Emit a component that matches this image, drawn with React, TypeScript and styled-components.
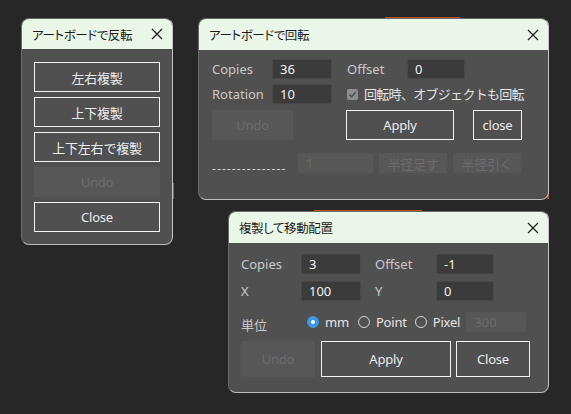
import React from 'react';
import styled, { createGlobalStyle } from 'styled-components';

const GlobalStyle = createGlobalStyle`
  html, body {
    margin: 0;
    padding: 0;
    background: #272727;
  }
  body {
    font-family: 'Noto Sans', 'Noto Sans CJK JP', sans-serif;
    -webkit-font-smoothing: antialiased;
  }
`;

const Desktop = styled.div`
  position: relative;
  width: 571px;
  height: 414px;
  overflow: hidden;
  background: #272727;
`;

const Window = styled.div<{ $left: number; $top: number; $w: number; $h: number }>`
  position: absolute;
  left: ${(p) => p.$left}px;
  top: ${(p) => p.$top}px;
  width: ${(p) => p.$w}px;
  height: ${(p) => p.$h}px;
  box-sizing: border-box;
  display: flex;
  flex-direction: column;
  background: #505050;
  border: 1px solid #6a6a6a;
  border-right-color: #c4c4c4;
  border-bottom-color: #bdbdbd;
  border-radius: 8px;
  overflow: hidden;
`;

const TitleBar = styled.div<{ $h: number }>`
  flex: none;
  height: ${(p) => p.$h}px;
  display: flex;
  align-items: center;
  justify-content: space-between;
  padding: 0 9px 0 10px;
  background: #eaf6e8;
  color: #1c1c1c;
  font-size: 12.5px;
  font-feature-settings: 'palt';
  letter-spacing: -0.4px;
`;

const CloseX = styled.span`
  display: flex;
  width: 12px;
  height: 12px;
`;

const Body = styled.div<{ $pad: string }>`
  flex: 1;
  display: flex;
  flex-direction: column;
  padding: ${(p) => p.$pad};
`;

const Stack = styled.div`
  display: flex;
  flex-direction: column;
  gap: 5px;
`;

const Row = styled.div<{ $mt?: number }>`
  display: flex;
  align-items: center;
  margin-top: ${(p) => p.$mt || 0}px;
`;

const Label = styled.span<{ $w: number; $dy?: number }>`
  flex: none;
  width: ${(p) => p.$w}px;
  color: #c9c9c9;
  font-size: 13px;
  line-height: 18px;
  position: relative;
  top: ${(p) => p.$dy || 0}px;
`;

const Field = styled.div<{ $w: number; $h?: number; $disabled?: boolean }>`
  flex: none;
  box-sizing: border-box;
  width: ${(p) => p.$w}px;
  height: ${(p) => p.$h || 20}px;
  padding-left: 7px;
  display: flex;
  align-items: center;
  background: ${(p) => (p.$disabled ? '#575757' : '#3b3b3b')};
  border: 1px solid ${(p) => (p.$disabled ? '#575757' : '#474747')};
  border-radius: 2px;
  color: ${(p) => (p.$disabled ? '#6c6c6c' : '#f2f2f2')};
  font-size: 13px;
`;

const Button = styled.div<{ $w: number; $h?: number; $disabled?: boolean; $ml?: number }>`
  flex: none;
  box-sizing: border-box;
  width: ${(p) => p.$w}px;
  height: ${(p) => p.$h || 30}px;
  margin-left: ${(p) => p.$ml || 0}px;
  display: flex;
  align-items: center;
  justify-content: center;
  background: ${(p) => (p.$disabled ? '#575757' : 'transparent')};
  border: 1px solid ${(p) => (p.$disabled ? '#575757' : '#f4f4f4')};
  color: ${(p) => (p.$disabled ? '#6c6c6c' : '#ececec')};
  font-size: 13px;
  letter-spacing: -0.2px;
`;

const Gap = styled.span<{ $w: number }>`
  flex: none;
  width: ${(p) => p.$w}px;
`;

const Check = styled.span`
  flex: none;
  width: 11px;
  height: 11px;
  border-radius: 2px;
  background: #8e8e8e;
  display: flex;
  align-items: center;
  justify-content: center;
  margin-right: 6px;
`;

const OptionText = styled.span<{ $mr?: number; $ls?: number }>`
  color: #e4e4e4;
  font-size: 13px;
  line-height: 18px;
  margin-right: ${(p) => p.$mr || 0}px;
  letter-spacing: ${(p) => (p.$ls !== undefined ? p.$ls : -0.2)}px;
`;

const Radio = styled.span<{ $on?: boolean }>`
  flex: none;
  box-sizing: border-box;
  width: 12px;
  height: 12px;
  border-radius: 50%;
  margin-right: 6px;
  display: flex;
  align-items: center;
  justify-content: center;
  background: ${(p) => (p.$on ? '#3d97e4' : 'transparent')};
  border: 1px solid ${(p) => (p.$on ? '#3d97e4' : '#d8d8d8')};

  &::after {
    content: '';
    display: ${(p) => (p.$on ? 'block' : 'none')};
    width: 4px;
    height: 4px;
    border-radius: 50%;
    background: #ffffff;
  }
`;

const Dashes = styled.span`
  flex: none;
  width: 86px;
  overflow: hidden;
  white-space: nowrap;
  color: #d0d0d0;
  font-size: 12px;
  letter-spacing: 1.1px;
  position: relative;
  top: 5px;
`;

const OrangeLine = styled.div<{ $l: number; $t: number; $w: number; $h: number }>`
  position: absolute;
  left: ${(p) => p.$l}px;
  top: ${(p) => p.$t}px;
  width: ${(p) => p.$w}px;
  height: ${(p) => p.$h}px;
  background: #b4541c;
`;

const XIcon = () => (
  <CloseX>
    <svg width="12" height="12" viewBox="0 0 12 12">
      <path d="M1 1L11 11M11 1L1 11" stroke="#1e1e1e" strokeWidth="1.2" fill="none" />
    </svg>
  </CloseX>
);

const CheckMark = () => (
  <svg width="9" height="9" viewBox="0 0 9 9">
    <path d="M1.5 4.6L3.6 6.7L7.6 2.3" stroke="#4a4a4a" strokeWidth="1.5" fill="none" />
  </svg>
);

export default function App() {
  return (
    <Desktop>
      <GlobalStyle />

      <OrangeLine $l={172} $t={183} $w={2} $h={16} />
      <OrangeLine $l={385} $t={17} $w={75} $h={1} />
      <OrangeLine $l={547} $t={88} $w={2} $h={18} />
      <OrangeLine $l={547} $t={185} $w={2} $h={14} />
      <OrangeLine $l={314} $t={210} $w={108} $h={1} />

      <Window $left={21} $top={18} $w={152} $h={227}>
        <TitleBar $h={30}>
          <span>アートボードで反転</span>
          <XIcon />
        </TitleBar>
        <Body $pad="13px 12px 0 12px">
          <Stack>
            <Button $w={126}>左右複製</Button>
            <Button $w={126}>上下複製</Button>
            <Button $w={126}>上下左右で複製</Button>
            <Button $w={126} $disabled>Undo</Button>
            <Button $w={126}>Close</Button>
          </Stack>
        </Body>
      </Window>

      <Window $left={198} $top={18} $w={351} $h={182}>
        <TitleBar $h={31}>
          <span>アートボードで回転</span>
          <XIcon />
        </TitleBar>
        <Body $pad="9px 0 0 13px">
          <Row>
            <Label $w={60}>Copies</Label>
            <Field $w={60}>36</Field>
            <Gap $w={15} />
            <Label $w={60}>Offset</Label>
            <Field $w={58}>0</Field>
          </Row>
          <Row $mt={5}>
            <Label $w={60}>Rotation</Label>
            <Field $w={60}>10</Field>
            <Gap $w={15} />
            <Check>
              <CheckMark />
            </Check>
            <OptionText $ls={-0.7}>回転時、オブジェクトも回転</OptionText>
          </Row>
          <Row $mt={6}>
            <Button $w={81} $disabled>Undo</Button>
            <Button $w={108} $ml={53}>Apply</Button>
            <Button $w={49} $ml={19}>close</Button>
          </Row>
          <Row $mt={13}>
            <Dashes>---------------</Dashes>
            <Field $w={75} $disabled>1</Field>
            <Button $w={68} $h={20} $ml={6} $disabled>半径足す</Button>
            <Button $w={68} $h={20} $ml={6} $disabled>半径引く</Button>
          </Row>
        </Body>
      </Window>

      <Window $left={228} $top={211} $w={321} $h={182}>
        <TitleBar $h={31}>
          <span>複製して移動配置</span>
          <XIcon />
        </TitleBar>
        <Body $pad="11px 0 0 12px">
          <Row>
            <Label $w={60}>Copies</Label>
            <Field $w={60}>3</Field>
            <Gap $w={14} />
            <Label $w={61}>Offset</Label>
            <Field $w={58}>-1</Field>
          </Row>
          <Row $mt={7}>
            <Label $w={60}>X</Label>
            <Field $w={60}>100</Field>
            <Gap $w={14} />
            <Label $w={61}>Y</Label>
            <Field $w={58}>0</Field>
          </Row>
          <Row $mt={11}>
            <Label $w={66} $dy={3}>単位</Label>
            <Radio $on />
            <OptionText $mr={9}>mm</OptionText>
            <Radio />
            <OptionText $mr={8}>Point</OptionText>
            <Radio />
            <OptionText>Pixel</OptionText>
            <Gap $w={6} />
            <Field $w={60} $disabled>300</Field>
          </Row>
          <Row $mt={9}>
            <Button $w={74} $h={36} $disabled>Undo</Button>
            <Button $w={130} $h={36} $ml={6}>Apply</Button>
            <Button $w={74} $h={36} $ml={5}>Close</Button>
          </Row>
        </Body>
      </Window>
    </Desktop>
  );
}
